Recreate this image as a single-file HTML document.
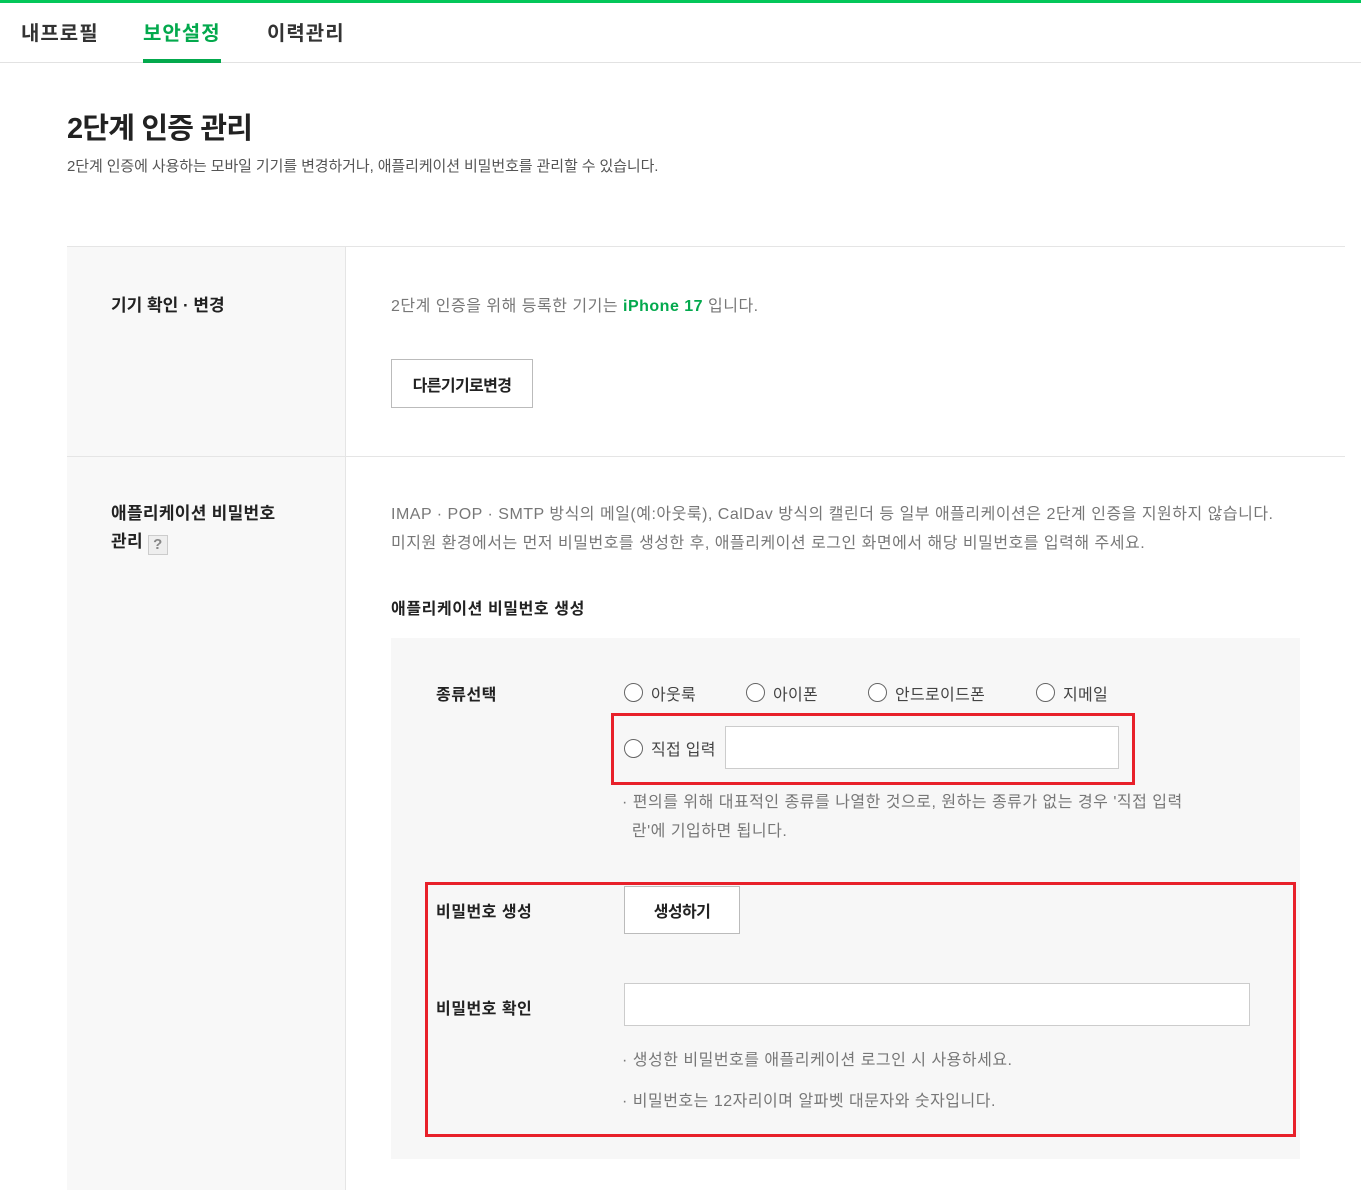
<!DOCTYPE html>
<html><head><meta charset="utf-8"><style>
*{margin:0;padding:0;box-sizing:border-box}
body{width:1361px;height:1190px;position:relative;background:#fff;font-family:"Liberation Sans","Noto Sans CJK KR",sans-serif;color:#222;overflow:hidden}
.a{position:absolute;white-space:nowrap}
.tab{font-size:20px;font-weight:bold;top:17px;color:#333;letter-spacing:1px}
.b{font-weight:bold;color:#222}
.g{color:#777;letter-spacing:0.5px}
.radio{position:absolute;width:19px;height:19px;border:1.5px solid #666;border-radius:50%;background:#fff}
.inp{position:absolute;background:#fff;border:1px solid #ccc}
.btn{position:absolute;background:#fff;border:1px solid #bbb;font-size:16px;font-weight:bold;display:flex;align-items:center;justify-content:center;letter-spacing:-0.6px}
</style></head><body>
<div class="a" style="left:0;top:0;width:1361px;height:3px;background:#03c75a"></div>
<div class="a tab" style="left:21px">내프로필</div>
<div class="a tab" style="left:143px;color:#03a94d">보안설정</div>
<div class="a tab" style="left:267px">이력관리</div>
<div class="a" style="left:0;top:62px;width:1361px;height:1px;background:#e2e2e2"></div>
<div class="a" style="left:143px;top:59px;width:78px;height:4px;background:#03a94d"></div>

<div class="a b" style="left:67px;top:105px;font-size:29px;letter-spacing:-0.8px">2단계 인증 관리</div>
<div class="a" style="left:67px;top:155px;font-size:15px;color:#555;letter-spacing:-0.1px">2단계 인증에 사용하는 모바일 기기를 변경하거나, 애플리케이션 비밀번호를 관리할 수 있습니다.</div>

<div class="a" style="left:67px;top:247px;width:278px;height:943px;background:#f8f8f8"></div>
<div class="a" style="left:345px;top:247px;width:1px;height:943px;background:#e5e5e5"></div>
<div class="a" style="left:67px;top:246px;width:1278px;height:1px;background:#e5e5e5"></div>
<div class="a" style="left:67px;top:456px;width:1278px;height:1px;background:#e5e5e5"></div>

<div class="a b" style="left:111px;top:291px;font-size:17px;letter-spacing:0px">기기 확인 · 변경</div>
<div class="a g" style="left:391px;top:292px;font-size:16px">2단계 인증을 위해 등록한 기기는 <b style="color:#03a94d">iPhone 17</b> 입니다.</div>
<div class="btn" style="left:391px;top:359px;width:142px;height:49px">다른기기로변경</div>

<div class="a b" style="left:111px;top:500px;font-size:17px;line-height:28px;letter-spacing:0.3px">애플리케이션 비밀번호<br>관리 <span style="display:inline-block;width:20px;height:20px;border:1px solid #ccc;background:#eee;color:#888;font-size:15px;text-align:center;line-height:18px;vertical-align:-2px">?</span></div>
<div class="a g" style="left:391px;top:500px;font-size:16px;line-height:29px">IMAP · POP · SMTP 방식의 메일(예:아웃룩), CalDav 방식의 캘린더 등 일부 애플리케이션은 2단계 인증을 지원하지 않습니다.<br>미지원 환경에서는 먼저 비밀번호를 생성한 후, 애플리케이션 로그인 화면에서 해당 비밀번호를 입력해 주세요.</div>
<div class="a b" style="left:391px;top:595px;font-size:16px;letter-spacing:0.6px">애플리케이션 비밀번호 생성</div>

<div class="a" style="left:391px;top:638px;width:909px;height:521px;background:#f7f7f7"></div>
<div class="a b" style="left:436px;top:681px;font-size:16px;letter-spacing:0.5px">종류선택</div>
<div class="radio" style="left:624px;top:683px"></div><div class="a" style="left:651px;top:681px;font-size:16px;color:#444;letter-spacing:0.3px">아웃룩</div>
<div class="radio" style="left:746px;top:683px"></div><div class="a" style="left:773px;top:681px;font-size:16px;color:#444;letter-spacing:0.3px">아이폰</div>
<div class="radio" style="left:868px;top:683px"></div><div class="a" style="left:895px;top:681px;font-size:16px;color:#444;letter-spacing:0.3px">안드로이드폰</div>
<div class="radio" style="left:1036px;top:683px"></div><div class="a" style="left:1063px;top:681px;font-size:16px;color:#444;letter-spacing:0.3px">지메일</div>
<div class="a" style="left:611px;top:713px;width:524px;height:72px;border:3px solid #e8202a"></div>
<div class="radio" style="left:624px;top:739px"></div><div class="a" style="left:651px;top:736px;font-size:16px;color:#444;letter-spacing:0.3px">직접 입력</div>
<div class="inp" style="left:725px;top:726px;width:394px;height:43px"></div>
<div class="a g" style="left:622px;top:788px;font-size:16px;line-height:29px">· 편의를 위해 대표적인 종류를 나열한 것으로, 원하는 종류가 없는 경우 '직접 입력<br>&nbsp;&nbsp;란'에 기입하면 됩니다.</div>

<div class="a" style="left:425px;top:882px;width:871px;height:255px;border:3px solid #e8202a"></div>
<div class="a b" style="left:436px;top:898px;font-size:16px;letter-spacing:0.5px">비밀번호 생성</div>
<div class="btn" style="left:624px;top:886px;width:116px;height:48px">생성하기</div>
<div class="a b" style="left:436px;top:995px;font-size:16px;letter-spacing:0.5px">비밀번호 확인</div>
<div class="inp" style="left:624px;top:983px;width:626px;height:43px"></div>
<div class="a g" style="left:622px;top:1046px;font-size:16px">· 생성한 비밀번호를 애플리케이션 로그인 시 사용하세요.</div>
<div class="a g" style="left:622px;top:1087px;font-size:16px">· 비밀번호는 12자리이며 알파벳 대문자와 숫자입니다.</div>
</body></html>
